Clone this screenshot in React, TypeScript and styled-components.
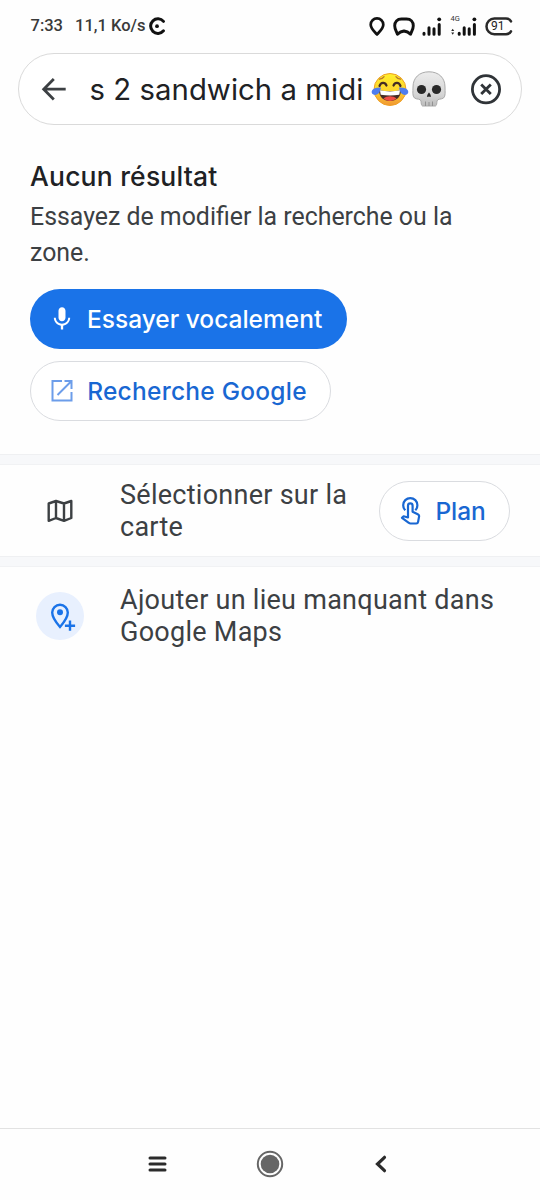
import React from 'react';
import styled, { createGlobalStyle } from 'styled-components';
import { MdMic } from 'react-icons/md';

const Global = createGlobalStyle`
  * { box-sizing: border-box; }
  html, body { margin: 0; background: #fefefe; }
  svg { display: block; flex: none; overflow: visible; }
`;
const brand = `Inter, Roboto, sans-serif`;

const Screen = styled.div`
  width: 540px; height: 1200px; display: flex; flex-direction: column;
  background: #fefefe; font-family: Roboto, sans-serif; color: #3c4043; overflow: hidden;
`;
const StatusBar = styled.header`
  height: 53px; flex: none; padding: 0 27px 0 30.5px; display: flex; align-items: center; justify-content: space-between;
`;
const StatusGroup = styled.div<{ $gap?: number }>`
  display: flex; align-items: center; gap: ${p => p.$gap ?? 0}px;
`;
const StatusText = styled.span<{ $width: number }>`
  width: ${p => p.$width}px; padding-bottom: 1px; font: 500 16.5px/20px Roboto, sans-serif; color: #3a3a3a; white-space: nowrap;
`;
const SearchBar = styled.div`
  height: 72px; flex: none; margin: 0 18px; padding: 0 19px 0 22px; display: flex; align-items: center;
  border: 1.5px solid #dadada; border-radius: 36px; background: #fff;
`;
const Query = styled.div`
  margin-left: 22.5px; flex: 1; display: flex; align-items: center; gap: 3.5px; white-space: nowrap;
  font: 400 29.3px/40px ${brand}; letter-spacing: 0.05px; color: #202124;
`;
const QueryText = styled.span` width: 277.5px; padding-top: 2px; `;
const Result = styled.section`
  height: 329px; flex: none; padding: 33px 30px 0; display: flex; flex-direction: column; align-items: flex-start;
`;
const Title = styled.h1`
  margin: 0; font: 500 26.5px/36px ${brand}; letter-spacing: 0.2px; color: #202124;
`;
const Hint = styled.p`
  margin: 5px 0 18px; font-size: 24.88px; line-height: 36px;
`;
const Pill = styled.button<{ $filled?: boolean; $width: number; $gap: number; $spacing: number; $inset: number }>`
  width: ${p => p.$width}px; height: 60px; flex: none; padding: 0 0 0 ${p => p.$inset}px; margin: 0;
  display: flex; align-items: center; gap: ${p => p.$gap}px; border-radius: 30px;
  border: ${p => (p.$filled ? '0' : '1.5px solid #dadce0')};
  background: ${p => (p.$filled ? '#1a73e8' : '#fff')};
  color: ${p => (p.$filled ? '#fff' : '#1967d2')};
  font: 500 24.5px/36px ${brand}; letter-spacing: ${p => p.$spacing}px; white-space: nowrap;
`;
const Actions = styled.div` display: flex; flex-direction: column; gap: 12px; `;
const Band = styled.div`
  height: 11px; flex: none; background: #f7f8fa; border-top: 1px solid #eff0f2; border-bottom: 1px solid #f1f2f4;
`;
const Row = styled.div<{ $height: number }>`
  height: ${p => p.$height}px; flex: none; padding: 0 30px 0 36px; display: flex; align-items: center;
`;
const IconDisc = styled.div<{ $tint?: boolean }>`
  width: 48px; height: 48px; flex: none; border-radius: 50%; display: flex; align-items: center; justify-content: center;
  background: ${p => (p.$tint ? '#e8f0fe' : 'transparent')};
`;
const Label = styled.div`
  margin-left: 36px; flex: 1; font-size: 27px; line-height: 32px; letter-spacing: 0.27px; white-space: nowrap;
`;
const Spacer = styled.div` flex: 1; `;
const NavBar = styled.nav`
  height: 72px; flex: none; border-top: 1px solid #e2e2e2; padding: 0 148px 2px 148px;
  display: flex; align-items: center; justify-content: space-between;
`;

const RingLogo = () => (
  <svg width="18" height="19" viewBox="0 0 18 19" fill="none">
    <path d="M15.500 4.400A7.300 7.300 0 1 0 15.500 13.800" stroke="#111" strokeWidth="3" strokeLinecap="round" />
    <circle cx="9" cy="9.200" r="1.900" fill="#111" />
  </svg>
);
const PinStatus = () => (
  <svg width="16" height="20" viewBox="0 0 16 20" fill="none" stroke="#111" strokeWidth="2.700" strokeLinejoin="round">
    <path d="M8 17.500C5.500 14.500 1.700 11.500 1.700 7.700a6.300 6.300 0 0 1 12.600 0C14.300 11.500 10.500 14.500 8 17.500Z" />
  </svg>
);
const MaskStatus = () => (
  <svg width="22" height="20" viewBox="0 0 22 20" fill="none" stroke="#111" strokeWidth="2.900" strokeLinejoin="round">
    <path d="M8.500 2h5c4.500 0 6.800 2.800 6.800 6.700 0 3-1.300 4.800-2.700 8.500L14.500 15l-3.500-1-3.500 1-3.100 2.200C3 13.500 1.700 11.700 1.700 8.700 1.700 4.800 4 2 8.500 2Z" />
  </svg>
);
const Signal = () => (
  <svg width="19" height="20" viewBox="0 0 19 20" stroke="#111" strokeWidth="3" strokeLinecap="round">
    <path d="M1 16.200v1M6 10.700v6.500M11 11.700v5.500M16.200 7.500v9.700" /><circle cx="16.200" cy="2.300" r="1.900" fill="#111" stroke="none" />
  </svg>
);
const Network = () => (
  <svg width="26" height="24" viewBox="0 0 26 24" stroke="#111" strokeWidth="3" strokeLinecap="round">
    <text x="-.5" y="5.700" fontFamily="Roboto, sans-serif" fontSize="7.500" stroke="none" fill="#333">4G</text>
    <path d="M8.200 18.200v1M13.200 12.700v6.500M18.200 13.700v5.500M23.400 9.500v9.700" /><circle cx="23.400" cy="4.300" r="1.900" fill="#111" stroke="none" />
    <path d="M.2 16l1.500-2.200L3.200 16zM.2 17.500l1.500 2.200 1.500-2.200z" stroke="none" fill="#222" />
  </svg>
);
const Battery = () => (
  <svg width="28" height="20" viewBox="0 0 28 20" fill="none">
    <path d="M26 4.400C25 2.300 23.500 1.600 21 1.600H9.300a7.800 7.800 0 0 0 0 15.600H21c2.500 0 4-.7 5-2.800" stroke="#2a2a2a" strokeWidth="2.500" strokeLinecap="round" />
    <text x="6" y="13.400" fontFamily="Roboto, sans-serif" fontSize="12" fill="#222">91</text>
  </svg>
);
const BackArrow = () => (
  <svg width="26" height="26" viewBox="0 0 26 26" fill="none" stroke="#3c4043" strokeWidth="2.800">
    <path d="M24.700 13.200H3M12.800 3 2.700 13.200l10.100 10.200" />
  </svg>
);
const ClearIcon = () => (
  <svg width="32" height="32" viewBox="0 0 32 32" fill="none" stroke="#303438" strokeWidth="2.800">
    <circle cx="16" cy="16.300" r="13.600" /><path d="m11.200 11.500 9.600 9.600M20.800 11.500l-9.600 9.600" />
  </svg>
);
const Joy = () => (
  <svg width="38" height="36" viewBox="0 0 38 36" role="img" aria-label="😂">
    <defs><linearGradient id="joy" x2="0" y2="1"><stop stopColor="#fff02d" /><stop offset=".55" stopColor="#fdd32c" /><stop offset="1" stopColor="#f19534" /></linearGradient></defs>
    <circle cx="19" cy="18.500" r="16" fill="url(#joy)" stroke="#ee9f25" />
    <path d="M8 19c7 1.700 15 1.700 22 0 0 7-4.500 11-11 11S8 26 8 19Z" fill="#442b24" />
    <path d="M9 19.300c6.500 1.500 13.500 1.500 20 0l-.7 4.500c-6 1-12.600 1-18.600 0Z" fill="#fff" />
    <path d="M12.500 27.500c3.500-3 9.500-3 13 0-3.700 3.300-9.300 3.300-13 0Z" fill="#ef4d45" />
    <g fill="none" strokeLinecap="round">
      <path d="M8.500 15c1.500-4 5.500-4 7-.5M22.500 14.500c1.500-3.500 5.500-3.500 7 .5" stroke="#442b24" strokeWidth="2.200" />
      <path d="M8.500 8.200c1.700-.2 3.500-1 4.600-2.500M29.500 8.200c-1.700-.2-3.500-1-4.600-2.500" stroke="#b9782b" strokeWidth="1.300" />
    </g>
    <path d="M10 16.500C9 23 5 25 2.300 23.500-1 21.500.5 16 10 16.500ZM28 16.500c1 6.500 5 8.500 7.700 7C39 21.500 37.500 16 28 16.500Z" fill="#4e7df0" />
  </svg>
);
const Skull = () => (
  <svg width="34" height="36" viewBox="0 0 34 36" role="img" aria-label="💀">
    <defs><linearGradient id="skull" x2="0" y2="1"><stop stopColor="#ececec" /><stop offset=".65" stopColor="#d6d6d6" /><stop offset="1" stopColor="#bcbcbc" /></linearGradient></defs>
    <path d="M17 .8C7 .8 1 7 1 16c0 5-.8 9 1.500 11 2 1.600 6 .5 6.500 3 .2 2.500.3 4.500 1.500 5h13c1.200-.5 1.300-2.500 1.500-5 .5-2.500 4.500-1.400 6.500-3 2.300-2 1.500-6 1.500-11C33 7 27 .8 17 .8Z" fill="url(#skull)" stroke="#aaa" />
    <circle cx="9.500" cy="18.500" r="4.600" fill="#282828" /><circle cx="24.500" cy="18.500" r="4.600" fill="#282828" />
    <path d="M17 21.500c-1.300 1.300-2.500 4-1.500 4.500.7.300 1-.5 1.500-.5s.8.800 1.500.5c1-.5-.2-3.200-1.500-4.500Z" fill="#282828" />
    <path d="M13.500 30.500v4.500M17 31v4M20.500 30.500v4.500" stroke="#929292" />
  </svg>
);
const ExternalIcon = () => (
  <svg width="28" height="28" viewBox="0 0 28 28" fill="none" stroke="#6c9dea" strokeWidth="2">
    <path d="M14 4H4.500v19.500h19V15M16.500 4h7v8M9.500 18 23 4.500" />
  </svg>
);
const MapIcon = () => (
  <svg width="28" height="26" viewBox="0 0 28 26" fill="none" stroke="#3c4043" strokeWidth="2.400" strokeLinejoin="round">
    <path d="M2.700 5.500 10 3l8 2.500L25.300 3v17L18 22.800 10 20l-7.300 2.800ZM10 3v17M18 5.500v17.300" />
  </svg>
);
const TouchIcon = () => (
  <svg width="24" height="30" viewBox="0 0 24 30" fill="none" stroke="#1967d2" strokeWidth="2.200" strokeLinejoin="round">
    <path d="M6.300 14.200A7.100 7.100 0 1 1 16.300 14.200" />
    <path d="M9 21.500V9.700a2.300 2.300 0 0 1 4.600 0v6l5.200 2.500c1 .5 1.500 1.200 1.300 2.200l-1 5.500q-.3 1.600-1.800 1.600H11.500q-1 0-1.700-.7L3 21.800l1.600-1.500Z" />
  </svg>
);
const AddPlaceIcon = () => (
  <svg width="28" height="30" viewBox="0 0 28 30" fill="none" stroke="#1a73e8" strokeWidth="2.400">
    <path d="M14 26C10 21.500 6.200 16.500 6.200 11.600a7.800 7.800 0 0 1 15.600 0C21.800 16.500 18 21.500 14 26Z" />
    <circle cx="14" cy="11.300" r="3" fill="#1a73e8" stroke="none" />
    <path d="M24 18v13M18.500 24.700h10" stroke="#e8f0fe" strokeWidth="5" /><path d="M24 19.600v10.200M18.900 24.700h10.200" />
  </svg>
);

export default function App() {
  return (
    <Screen>
      <Global />
      <StatusBar>
        <StatusGroup>
          <StatusText $width={44.5}>7:33</StatusText>
          <StatusText $width={73}>11,1 Ko/s</StatusText>
          <RingLogo />
        </StatusGroup>
        <StatusGroup $gap={8.3}>
          <PinStatus /><MaskStatus /><Signal /><Network /><Battery />
        </StatusGroup>
      </StatusBar>
      <SearchBar>
        <BackArrow />
        <Query><QueryText>s 2 sandwich a midi</QueryText><Joy /><Skull /></Query>
        <ClearIcon />
      </SearchBar>
      <Result>
        <Title>Aucun résultat</Title>
        <Hint>Essayez de modifier la recherche ou la zone.</Hint>
        <Actions>
          <Pill $filled $inset={17.5} $width={317} $gap={11.5} $spacing={0}><MdMic size={28} />Essayer vocalement</Pill>
          <Pill $inset={16.7} $width={301} $gap={11.5} $spacing={0.25}><ExternalIcon />Recherche Google</Pill>
        </Actions>
      </Result>
      <Band />
      <Row $height={91}>
        <IconDisc><MapIcon /></IconDisc>
        <Label>Sélectionner sur la<br />carte</Label>
        <Pill $inset={18.5} $width={131} $gap={13} $spacing={-0.1}><TouchIcon />Plan</Pill>
      </Row>
      <Band />
      <Row $height={98}>
        <IconDisc $tint><AddPlaceIcon /></IconDisc>
        <Label>Ajouter un lieu manquant dans<br />Google Maps</Label>
      </Row>
      <Spacer />
      <NavBar>
        <svg width="19" height="18" viewBox="0 0 19 18" stroke="#2b2b2b" strokeWidth="3" strokeLinecap="round"><path d="M2 3h15M2 9h15M2 15h15" /></svg>
        <svg width="28" height="28" viewBox="0 0 28 28"><circle cx="14" cy="14" r="12.200" fill="none" stroke="#666" strokeWidth="2" /><circle cx="14" cy="14" r="9.300" fill="#666" /></svg>
        <svg width="20" height="20" viewBox="0 0 20 20" fill="none" stroke="#2b2b2b" strokeWidth="3.200" strokeLinecap="round"><path d="M12.500 3.300 5.500 10l7 6.700" /></svg>
      </NavBar>
    </Screen>
  );
}
